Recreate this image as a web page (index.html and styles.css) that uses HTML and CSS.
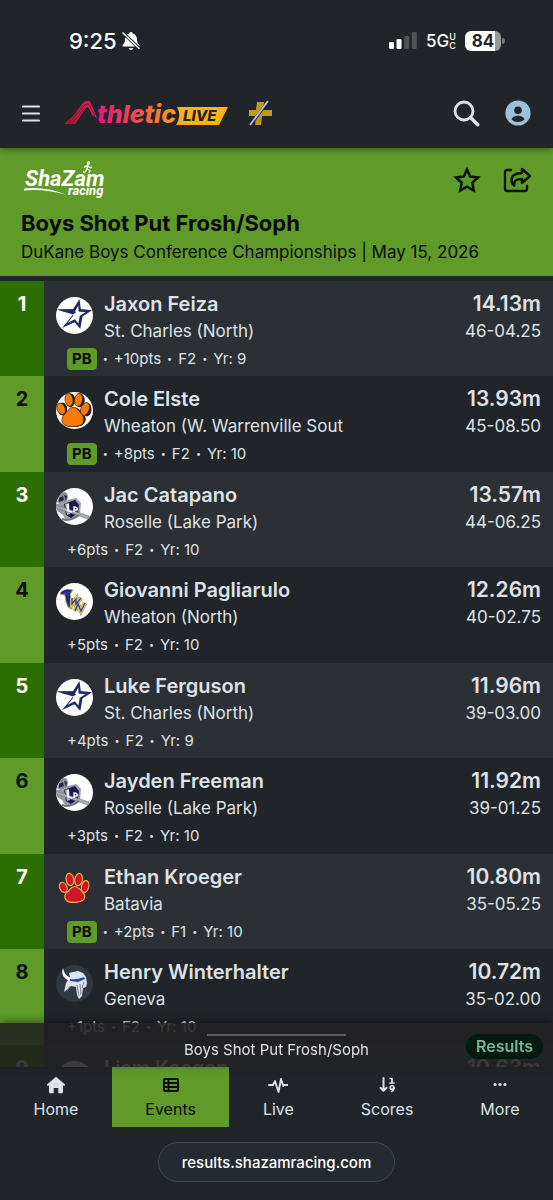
FILE: index.html
```html
<!DOCTYPE html>
<html lang="en">
<head>
<meta charset="utf-8">
<meta name="viewport" content="width=device-width, initial-scale=1">
<title>Boys Shot Put Frosh/Soph</title>
<link rel="stylesheet" href="styles.css">
</head>
<body>
<svg class="sprite" aria-hidden="true">
  <symbol id="logo-star" viewBox="0 0 37 37">
    <circle cx="18.500" cy="18.500" r="18.500" fill="#fff"/>
    <path d="M1 12.500 17 12.200 23.500 2 24.800 12 36 13.200 26.500 19.500 24.300 32 18.600 25.300 6 31 14 21.500 17 17.500Z" fill="#1d2a63"/>
    <path d="M8 14.600 19 14.600 22.300 8.500 22.600 14.500 29.500 15.200 23.800 18.800 22.400 26.500 18.800 22.300 11.500 26 17.500 18.500Z" fill="#fff"/>
    <path d="M1 12.500 17 12.200 20 15.500 17 17.500Z" fill="#1d2a63"/>
  </symbol>
  <symbol id="logo-paw" viewBox="0 0 37 37">
    <circle cx="18.500" cy="18.500" r="18.500" fill="#fff"/>
    <g fill="#161616" stroke="#161616" stroke-width="1">
      <ellipse cx="14.500" cy="8.300" rx="4.200" ry="6.500"/><ellipse cx="24" cy="8.300" rx="4.200" ry="6.500"/>
      <ellipse cx="6.500" cy="17" rx="4.200" ry="6"/><ellipse cx="31" cy="17.500" rx="4" ry="6.500"/>
      <path d="M18.500 16c5 0 6 4 9 7s2 8-2 10-12 2-16 0-4-7-1-10 5-7 10-7z"/>
    </g>
    <g fill="#f97a06" stroke="#30200a" stroke-width=".6">
      <ellipse cx="13" cy="7.800" rx="4" ry="6.400" transform="rotate(-8 13 8)"/><ellipse cx="22.500" cy="7.800" rx="4" ry="6.400" transform="rotate(8 22 8)"/>
      <ellipse cx="5.200" cy="16.800" rx="4" ry="6" transform="rotate(-22 5 17)"/><ellipse cx="29" cy="17" rx="4.200" ry="6.600" transform="rotate(20 29 17)"/>
      <path d="M17 15.500c5 0 6 4 8.500 6.500s3.500 8 0 10.500-13 3-17 .5-3-8 0-10.500 4-7 8.500-7z"/>
    </g>
  </symbol>
  <symbol id="logo-knight" viewBox="0 0 37 37">
    <circle cx="18.500" cy="18.500" r="18.500" fill="#fff"/>
    <path d="M4 7C7 3 11 3 12 8l-1 6-7 2L1 14Z" fill="#8c8e98"/>
    <path d="M3 10l4-2 1 4-5 2zM8 7l3 1-1 5z" fill="#252545"/>
    <path d="M0 16l8-1 4-3 8-2 5 5-1 11-7 5-7 1-4-6-5-3Z" fill="#9a9ca5"/>
    <path d="M8 16l11-4 4 5-1 8-7 5-5-3Z" fill="#15194d"/>
    <path d="M9 16l4-1 1 11-3 1Z" fill="#b6b8bf"/>
    <path d="M0 17l33 11-1 3L0 20Z" fill="#a9abb3" stroke="#66686f" stroke-width=".5"/>
    <path d="M12 16v7l4 1M18 24v-5q4 0 3 3l-3 0" fill="none" stroke="#fff" stroke-width="1.500"/>
    <path d="M6 31q8 3 17-4" fill="none" stroke="#73757e" stroke-width="2"/>
  </symbol>
  <symbol id="logo-falcon" viewBox="0 0 37 37">
    <circle cx="18.500" cy="18.500" r="18.500" fill="#fff"/>
    <path d="M4 11Q7 5 17 7l-3 4 2 15-4-2-2-5-1-7Z" fill="#2c38a6" stroke="#a99a36" stroke-width="1"/>
    <path d="M5 10q5-4 10-2M10 12l4 10M13 10l1 8" fill="none" stroke="#111b65" stroke-width="1.200"/>
    <g fill="none">
      <path d="M16 15v6l4-5v5l5-6M19 28l3-7 3 7 4-8" stroke="#a99b2d" stroke-width="4.400"/>
      <path d="M16 15v6l4-5v5l5-6M19 28l3-7 3 7 4-8" stroke="#e8df87" stroke-width="3"/>
      <path d="M16 15v6l4-5v5l5-6M19 28l3-7 3 7 4-8" stroke="#3b4180" stroke-width="1.400"/>
    </g>
  </symbol>
  <symbol id="logo-redpaw" viewBox="0 0 37 37">
    <g fill="#d0142c" stroke="#f3b13e" stroke-width="1.200">
      <ellipse cx="14" cy="9.500" rx="3.800" ry="6.200" transform="rotate(-10 14 10)"/><ellipse cx="22.500" cy="9.500" rx="3.800" ry="6.200" transform="rotate(10 22 10)"/>
      <ellipse cx="7.500" cy="17.500" rx="3.600" ry="5.200" transform="rotate(-24 7 18)"/><ellipse cx="29" cy="16.500" rx="3.600" ry="6" transform="rotate(14 29 17)"/>
      <path d="M18.500 16.500c4 0 5 3 8 5.500s3 6.500 0 8.500-13 3-16 0-2-6.500 1-8.500 3-5.500 7-5.500z"/>
    </g>
  </symbol>
  <symbol id="logo-viking" viewBox="0 0 37 37">
    <circle cx="18.500" cy="18.500" r="18.500" fill="#303844"/>
    <path d="M7 3c-2 5 0 11 7 13l3-3C10 12 8 8 7 3Z" fill="#fff"/>
    <path d="M13 8l4-1 5-1 5 2 3 4 1 6-1 4-3 1-1 8-3 3-2-4-1-8-5-1-7 6 2-9 4-6Z" fill="#dce4ec"/>
    <path d="M14 14q7 1 14-2l1 2-7 3-8-1Z" fill="#244b9e"/>
    <path d="M14 21l-3 5M21 20l2 11M24 19l1 11M28 17l-2 6" stroke="#778594" fill="none"/>
  </symbol>
</svg>

<div class="page">
  <header class="topbar">
    <div class="status">
      <div class="status-left">
        <span class="clock">9:25</span>
        <svg width="20" height="20" viewBox="0 0 20 20" aria-label="Silent"><path d="M10 1c-1 0-1.600.7-1.600 1.500C5.500 3.300 4 5.500 4 8.500c0 3-1 4-2.500 5.500v1.500h17V14c-1.500-1.500-2.500-2.500-2.500-5.500 0-3-1.500-5.200-4.400-6C11.600 1.700 11 1 10 1zM7.500 17a2.600 2.600 0 0 0 5 0z" fill="#fff"/><path d="M1 1 19 18" stroke="#212429" stroke-width="3.200"/><path d="M1.500 1.500 18.500 17.800" stroke="#fff" stroke-width="1.500"/></svg>
      </div>
      <div class="status-right">
        <svg width="28" height="18" viewBox="0 0 28 18" aria-label="Signal"><g fill="#fff"><rect y="10" width="5" height="7" rx="1.300"/><rect x="7.500" y="7" width="5" height="10" rx="1.300"/></g><g fill="#505256"><rect x="15.200" y="4" width="5" height="13" rx="1.300"/><rect x="22.800" width="5" height="17" rx="1.300"/></g></svg>
        <span class="network"><span>5G</span><span class="network-sub"><span>U</span><span>C</span></span></span>
        <span class="battery"><span class="battery-level">84</span></span>
      </div>
    </div>
    <div class="appbar">
      <button class="icon-btn" aria-label="Menu"><svg width="18" height="17" viewBox="0 0 18 17"><path d="M1 1.500h16M1 8.500h16M1 15.500h16" stroke="#dee2e6" stroke-width="2.200" stroke-linecap="round"/></svg></button>
      <a class="brand" href="#" aria-label="Athletic Live">
        <svg width="164" height="34" viewBox="0 -3 164 34">
          <defs>
            <linearGradient id="word" gradientUnits="userSpaceOnUse" x1="32" y1="0" x2="114" y2="0"><stop offset="0" stop-color="#df1683"/><stop offset=".45" stop-color="#ee4657"/><stop offset="1" stop-color="#f9a51d"/></linearGradient>
            <linearGradient id="peak" x1="0" y1="0" x2="1" y2="0"><stop offset="0" stop-color="#b5122c"/><stop offset="1" stop-color="#df2160"/></linearGradient>
          </defs>
          <path d="M0 25 10 16 18 5Q22 0 26 2.500L33 19 28 16 25 9.500Q23 7 20.500 11L11 25Z" fill="url(#peak)"/>
          <path d="M4 25 20 6.500q4-3 6 1l5 9.500M8 25 20.500 9" fill="none" stroke="#6c1830" stroke-width=".9"/>
          <path d="M113 8h51l-9 18h-43q6-9 1-18Z" fill="#fbb216"/>
          <text class="brand-word" x="33" y="24" fill="url(#word)">thletic</text>
          <text class="brand-live" x="119" y="22">LIVE</text>
        </svg>
      </a>
      <svg class="plus" width="25" height="26" viewBox="0 0 25 26" aria-label="Plus"><path d="M9 2h7l-1 8h9v6h-10l-1 9H7l1-9H1v-6h7Z" fill="#c99718"/><path d="M20.500 1 2.500 25" stroke="#212429" stroke-width="3"/><path d="M20 1 2 25" stroke="#a9c8dc" stroke-width="1.900"/></svg>
      <span class="spacer"></span>
      <button class="icon-btn" aria-label="Search"><svg width="27" height="27" viewBox="0 0 27 27" fill="none" stroke="#dee2e6" stroke-width="2.800" stroke-linecap="round"><circle cx="11" cy="11" r="9"/><path d="m17.800 17.800 7 7" stroke-width="3.400"/></svg></button>
      <button class="icon-btn" aria-label="Account"><svg width="26" height="26" viewBox="0 0 26 26"><circle cx="13" cy="13" r="12.600" fill="#9cc1d9"/><circle cx="13" cy="10.300" r="3.800" fill="#212429"/><path d="M6.500 19.500c1-3 4-3.800 6.500-3.800s5.500.8 6.500 3.800q-2.800 2.500-6.500 2.500t-6.500-2.500z" fill="#212429"/></svg></button>
    </div>
  </header>

  <section class="event">
    <div class="event-bar">
      <svg width="88" height="40" viewBox="0 0 88 40" role="img" aria-label="ShaZam racing">
        <text class="sz-word" x="1" y="26">ShaZam</text>
        <text class="sz-sub" x="44" y="35">racing</text>
        <path d="M0 28.500Q22 26 43 35 20 28.500 0 30.500Z" fill="#fff"/>
        <circle cx="64.500" cy="3" r="1.700" fill="#fff"/><path d="M64 4.500 63 9l3 1.500-1 2.500M63 9l-2 3-2 0M60 7.500l3-2 3 2 2 0" fill="none" stroke="#fff" stroke-width="1.300"/>
      </svg>
      <span class="spacer"></span>
      <button class="icon-btn" aria-label="Favorite"><svg width="28" height="28" viewBox="0 0 28 28"><path d="m14 3.500 3.200 7.100 7.800.9-5.700 5.300 1.500 7.700-6.800-3.800-6.800 3.800 1.500-7.700L3 11.500l7.800-.9Z" fill="none" stroke="#0b1404" stroke-width="2.500"/></svg></button>
      <button class="icon-btn" aria-label="Share"><svg width="30" height="28" viewBox="0 0 30 28" fill="none" stroke="#0b1404" stroke-width="2.400" stroke-linejoin="round" stroke-linecap="round"><path d="M9 4H5.500Q3 4 3 6.500v16Q3 25 5.500 25h17q2.500 0 2.500-2.500V20"/><path d="M20 3v4c-7 0-10.500 3-10.500 7.500 0 2.200 1 3.800 2.800 5-.8-5 2.200-6.500 7.700-6.500v4l8-7Z"/></svg></button>
    </div>
    <h1>Boys Shot Put Frosh/Soph</h1>
    <p>DuKane Boys Conference Championships | May 15, 2026</p>
  </section>

  <ol class="results">
    <li class="row"><span class="rank">1</span><div class="entry"><svg class="logo"><use href="#logo-star"/></svg><strong class="name">Jaxon Feiza</strong><strong class="mark">14.13m</strong><span class="school">St. Charles (North)</span><span class="imperial">46-04.25</span><div class="meta"><b class="pb">PB</b><i class="dot">•</i><span>+10pts</span><i class="dot">•</i><span>F2</span><i class="dot">•</i><span>Yr: 9</span></div></div></li>
    <li class="row"><span class="rank">2</span><div class="entry"><svg class="logo"><use href="#logo-paw"/></svg><strong class="name">Cole Elste</strong><strong class="mark">13.93m</strong><span class="school">Wheaton (W. Warrenville Sout</span><span class="imperial">45-08.50</span><div class="meta"><b class="pb">PB</b><i class="dot">•</i><span>+8pts</span><i class="dot">•</i><span>F2</span><i class="dot">•</i><span>Yr: 10</span></div></div></li>
    <li class="row"><span class="rank">3</span><div class="entry"><svg class="logo"><use href="#logo-knight"/></svg><strong class="name">Jac Catapano</strong><strong class="mark">13.57m</strong><span class="school">Roselle (Lake Park)</span><span class="imperial">44-06.25</span><div class="meta"><span>+6pts</span><i class="dot">•</i><span>F2</span><i class="dot">•</i><span>Yr: 10</span></div></div></li>
    <li class="row"><span class="rank">4</span><div class="entry"><svg class="logo"><use href="#logo-falcon"/></svg><strong class="name">Giovanni Pagliarulo</strong><strong class="mark">12.26m</strong><span class="school">Wheaton (North)</span><span class="imperial">40-02.75</span><div class="meta"><span>+5pts</span><i class="dot">•</i><span>F2</span><i class="dot">•</i><span>Yr: 10</span></div></div></li>
    <li class="row"><span class="rank">5</span><div class="entry"><svg class="logo"><use href="#logo-star"/></svg><strong class="name">Luke Ferguson</strong><strong class="mark">11.96m</strong><span class="school">St. Charles (North)</span><span class="imperial">39-03.00</span><div class="meta"><span>+4pts</span><i class="dot">•</i><span>F2</span><i class="dot">•</i><span>Yr: 9</span></div></div></li>
    <li class="row"><span class="rank">6</span><div class="entry"><svg class="logo"><use href="#logo-knight"/></svg><strong class="name">Jayden Freeman</strong><strong class="mark">11.92m</strong><span class="school">Roselle (Lake Park)</span><span class="imperial">39-01.25</span><div class="meta"><span>+3pts</span><i class="dot">•</i><span>F2</span><i class="dot">•</i><span>Yr: 10</span></div></div></li>
    <li class="row"><span class="rank">7</span><div class="entry"><svg class="logo"><use href="#logo-redpaw"/></svg><strong class="name">Ethan Kroeger</strong><strong class="mark">10.80m</strong><span class="school">Batavia</span><span class="imperial">35-05.25</span><div class="meta"><b class="pb">PB</b><i class="dot">•</i><span>+2pts</span><i class="dot">•</i><span>F1</span><i class="dot">•</i><span>Yr: 10</span></div></div></li>
    <li class="row"><span class="rank">8</span><div class="entry"><svg class="logo"><use href="#logo-viking"/></svg><strong class="name">Henry Winterhalter</strong><strong class="mark">10.72m</strong><span class="school">Geneva</span><span class="imperial">35-02.00</span><div class="meta"><span>+1pts</span><i class="dot">•</i><span>F2</span><i class="dot">•</i><span>Yr: 10</span></div></div></li>
    <li class="row"><span class="rank">9</span><div class="entry"><svg class="logo"><use href="#logo-falcon"/></svg><strong class="name">Liam Keegan</strong><strong class="mark">10.63m</strong></div></li>
  </ol>
</div>

<footer class="dock">
  <div class="sheet">
    <span class="grabber"></span>
    <span class="sheet-title">Boys Shot Put Frosh/Soph</span>
    <span class="chip">Results</span>
  </div>
  <nav class="tabs">
    <a class="tab" href="#"><svg width="20" height="18" viewBox="0 0 20 18"><path d="M10 .7 19 8.500q.6 1.200-.8 1.200H17V16q0 1.300-1.300 1.300H12.300V12H7.700v5.300H4.300Q3 17.300 3 16V9.700H1.800Q.4 9.700 1 8.500Z" fill="currentColor"/></svg>Home</a>
    <a class="tab tab-active" href="#" aria-current="page"><svg width="20" height="18" viewBox="0 0 20 18"><rect x="3" y="3" width="14" height="12" rx="1" fill="none" stroke="currentColor" stroke-width="2"/><path d="M3 7h14M3 11h14M7.500 3v12" stroke="currentColor" stroke-width="1.800"/></svg>Events</a>
    <a class="tab" href="#"><svg width="20" height="18" viewBox="0 0 20 18"><path d="M1 9h4l2-4 3.500 11L13 3l2.300 7L16 9h3.500" fill="none" stroke="currentColor" stroke-width="1.900" stroke-linejoin="round" stroke-linecap="round"/></svg>Live</a>
    <a class="tab" href="#"><svg width="20" height="18" viewBox="0 0 20 18" fill="none" stroke="currentColor" stroke-width="2" stroke-linecap="round" stroke-linejoin="round"><path d="M6.500 2v12.500M3.500 11.800l3 3 3-3"/><path d="M13.300 2.500h1.700v4.300M13 7h4" stroke-width="1.700"/><circle cx="15" cy="11.500" r="1.800" stroke-width="1.600"/><path d="M17 11.500q0 3-2.500 4" stroke-width="1.600"/></svg>Scores</a>
    <a class="tab" href="#"><svg width="20" height="18" viewBox="0 0 20 18" fill="currentColor"><circle cx="5" cy="8.500" r="1.600"/><circle cx="10" cy="8.500" r="1.600"/><circle cx="15" cy="8.500" r="1.600"/></svg>More</a>
  </nav>
  <div class="browser"><button class="address">results.shazamracing.com</button></div>
</footer>
</body>
</html>
```
FILE: styles.css
```css
* { box-sizing: border-box; }

body {
  margin: 0;
  background: #212429;
  color: #dee2e6;
  font-family: Inter, "Liberation Sans", sans-serif;
}

button {
  padding: 0;
  border: 0;
  background: none;
  color: inherit;
  font: inherit;
}

svg { display: block; flex: none; }

.sprite { position: absolute; width: 0; height: 0; }
.spacer { flex: 1; }

.page {
  display: flex;
  flex-direction: column;
  min-height: 100vh;
  padding-bottom: 60px;
}

/* Status and app bars */
.topbar {
  position: relative;
  z-index: 1;
  background: #212429;
  box-shadow: 0 2px 6px rgba(0, 0, 0, 0.35);
}

.status {
  display: flex;
  align-items: center;
  justify-content: space-between;
  height: 82px;
  padding: 0 52px 0 69px;
  color: #fff;
}

.status-left { display: flex; align-items: center; gap: 4px; }
.status-right { display: flex; align-items: center; gap: 9px; }
.clock { font-size: 22px; font-weight: 500; }
.network { display: flex; align-items: center; font-size: 17px; font-weight: 500; }
.network-sub { display: flex; flex-direction: column; font-size: 9px; line-height: 9px; }

.battery {
  position: relative;
  width: 36px;
  height: 20px;
  border-radius: 6px;
  background: linear-gradient(90deg, #fff 84%, #97989a 84%);
  color: #212429;
  text-align: center;
}
.battery::after {
  content: "";
  position: absolute;
  top: 7px;
  right: -4px;
  width: 3px;
  height: 6px;
  border-radius: 0 3px 3px 0;
  background: #77797c;
}
.battery-level { display: block; font-size: 17px; font-weight: 700; line-height: 20px; }

.appbar {
  display: flex;
  align-items: center;
  height: 66px;
  padding: 0 22px 4px;
}
.icon-btn { display: block; }
.brand { margin-left: 24px; }
.plus { margin-left: 20px; }
.appbar .icon-btn + .icon-btn { margin-left: 25px; }

.brand-word { font-size: 25px; font-weight: 800; font-style: italic; }
.brand-live { font-size: 15px; font-weight: 800; font-style: italic; fill: #212429; }

/* Event banner */
.event {
  padding: 12px 21px 10px;
  background: #609a29;
  color: #060b02;
}
.event-bar { display: flex; align-items: center; padding-left: 3px; margin-bottom: 8px; }
.event-bar .icon-btn + .icon-btn { margin-left: 21px; }
.sz-word { font-family: Roboto, sans-serif; font-size: 22px; font-weight: 700; font-style: italic; fill: #fff; }
.sz-sub { font-family: Roboto, sans-serif; font-size: 13px; font-weight: 700; font-style: italic; fill: #fff; }

.event h1 { margin: 0; font-size: 22px; font-weight: 700; line-height: 30px; }
.event p { margin: 0; font-size: 17px; line-height: 28px; white-space: nowrap; }

/* Results */
.results {
  flex: 1;
  display: grid;
  grid-auto-rows: minmax(95px, 1fr);
  margin: 0;
  padding: 5px 0 0;
  list-style: none;
}
.row { display: grid; grid-template-columns: 44px 1fr; }
.row:nth-child(odd) { background: #2c3034; }

.rank {
  padding-top: 9px;
  background: #609a29;
  color: #0b1404;
  font-size: 20px;
  font-weight: 700;
  line-height: 28px;
  text-align: center;
}
.row:nth-child(odd) .rank { background: #2d6e00; color: #fff; }

.entry {
  display: grid;
  grid-template-columns: 37px 1fr auto;
  grid-template-rows: 28px 27px 28px;
  column-gap: 11px;
  padding: 9px 12px 0;
}
.logo { grid-row: 1 / 3; width: 37px; height: 37px; margin-top: 7px; }
.name { font-size: 20px; font-weight: 600; line-height: 28px; }
.mark { font-size: 21px; font-weight: 600; line-height: 28px; }
.school, .imperial { font-size: 17px; line-height: 27px; }
.mark, .imperial { text-align: right; }
.meta {
  grid-column: 1 / -1;
  display: flex;
  align-items: center;
  gap: 6px;
  padding-left: 11px;
  font-size: 15px;
  line-height: 28px;
}
.dot { font-size: 9px; font-style: normal; }
.pb {
  padding: 0 5px;
  border-radius: 4px;
  background: #609a29;
  color: #060b02;
  font-size: 15px;
  font-weight: 700;
  line-height: 22px;
}

/* Bottom dock */
.dock { position: fixed; right: 0; bottom: 0; left: 0; }

.sheet {
  position: relative;
  display: flex;
  flex-direction: column;
  align-items: center;
  height: 44px;
  padding-top: 11px;
  background: rgba(33, 33, 34, 0.88);
  box-shadow: 0 -2px 8px rgba(0, 0, 0, 0.4);
}
.grabber { width: 25%; height: 2px; background: #5a5b5d; }
.sheet-title { margin-top: 3px; font-size: 15px; line-height: 22px; }
.chip {
  position: absolute;
  top: 11px;
  right: 10px;
  padding: 0 10px;
  border-radius: 13px;
  background: #051b11;
  color: #75b798;
  font-size: 16px;
  font-weight: 600;
  line-height: 25px;
}

.tabs { display: flex; height: 60px; background: #212429; }
.tab {
  flex: 1 1 auto;
  display: flex;
  flex-direction: column;
  align-items: center;
  gap: 4px;
  padding-top: 9px;
  color: #dee2e6;
  font-size: 16px;
  line-height: 22px;
  text-decoration: none;
}
.tab-active { background: #609a29; color: #060b02; }

.browser {
  display: flex;
  justify-content: center;
  height: 73px;
  padding-top: 15px;
  background: #212429;
}
.address {
  height: 40px;
  padding: 0 23px;
  border: 1px solid #3d474d;
  border-radius: 20px;
  background: #242a2f;
  color: #fff;
  font-size: 15px;
  font-weight: 500;
}
```
